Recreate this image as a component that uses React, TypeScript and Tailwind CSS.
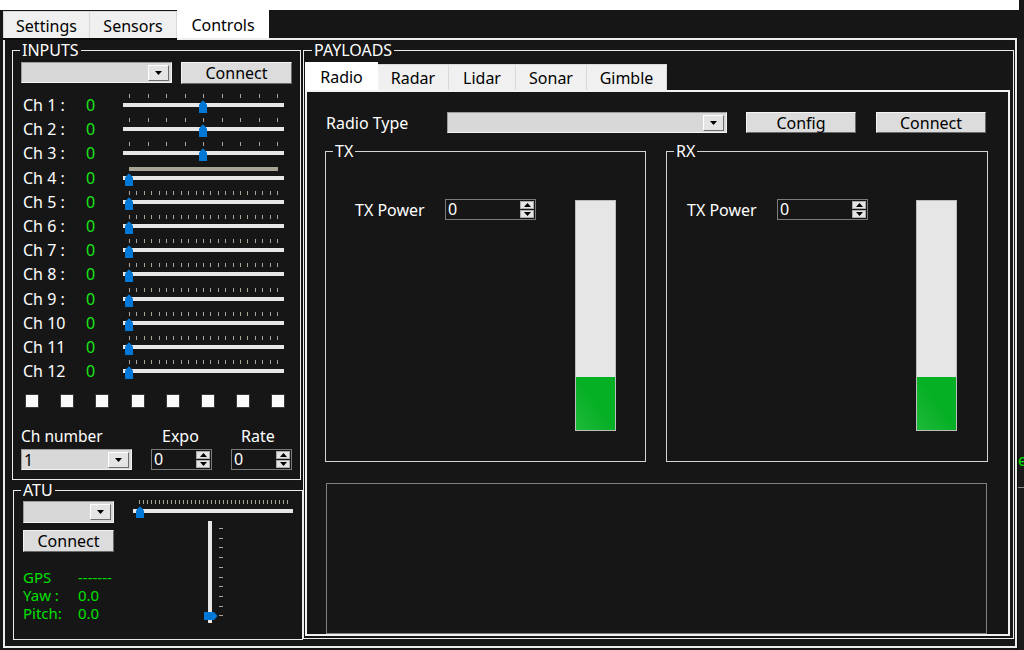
import React from "react";

type SliderProps = {
  ticks: number;
  pos: number;
  bar?: boolean;
};

const UpThumb = ({ h = 13 }: { h?: number }) => (
  <svg width="8" height={h} viewBox={`0 0 8 ${h}`}>
    <path d={`M0 4.5 L3.2 1 Q4 0.2 4.8 1 L8 4.5 V${h} H0 Z`} fill="#0078d7" />
  </svg>
);

const ChSlider = ({ ticks, pos, bar }: SliderProps) => {
  const step = (154 - 6) / (ticks - 1);
  return (
    <div className="relative w-[161px] h-full">
      {bar ? (
        <div className="absolute left-[6px] top-[1.5px] w-[149px] h-[4px] bg-[#a8a496]" />
      ) : (
        Array.from({ length: ticks }).map((_, i) => (
          <div
            key={i}
            className="absolute top-[1px] w-px h-[4px] bg-[#aaa598]"
            style={{ left: Math.round(6 + i * step) }}
          />
        ))
      )}
      <div className="absolute left-0 top-[10px] w-full h-[4px] bg-[#e7e7e7]" />
      <div className="absolute top-[7px] flex" style={{ left: pos - 4 }}>
        <UpThumb />
      </div>
    </div>
  );
};

const Channel = ({ n, ticks, pos, bar }: { n: number } & SliderProps) => (
  <div className="flex h-[24.2px] items-center">
    <span className="w-[73px] pl-[10px] text-[16px] leading-[18px] text-white">
      Ch {n}
      {n < 10 ? " :" : ""}
    </span>
    <span className="w-[37px] text-[16px] leading-[18px] text-[#19e619]">0</span>
    <ChSlider ticks={ticks} pos={pos} bar={bar} />
  </div>
);

const Combo = ({ className, value }: { className: string; value?: string }) => (
  <div
    className={`flex items-center justify-between bg-[#d8d8d8] border border-t-[#9d9d9d] border-l-[#9d9d9d] border-r-[#f4f4f4] border-b-[#f4f4f4] ${className}`}
  >
    <span className="pl-[2px] text-[16px] leading-[18px] text-black">{value}</span>
    <div className="mr-[2px] w-[21px] h-[16px] flex items-center justify-center bg-[#e4e4e4] border border-t-white border-l-white border-r-[#6d6d6d] border-b-[#6d6d6d]">
      <svg width="7" height="4" viewBox="0 0 7 4">
        <path d="M0 0H7L3.5 4Z" fill="#000" />
      </svg>
    </div>
  </div>
);

const Button = ({ className, children }: { className: string; children: React.ReactNode }) => (
  <div
    className={`flex items-center justify-center bg-[#dcdcdc] border border-t-[#f4f4f4] border-l-[#f4f4f4] border-r-[#6a6a6a] border-b-[#6a6a6a] text-[16px] leading-[18px] text-black ${className}`}
  >
    {children}
  </div>
);

const Spin = ({ className }: { className: string }) => (
  <div className={`flex bg-[#161616] border border-[#7c7c7c] ${className}`}>
    <span className="flex-1 pl-[2px] text-[16px] leading-[19px] text-white">0</span>
    <div className="w-[16px] flex flex-col p-px gap-px">
      <div className="flex-1 flex items-center justify-center bg-[#e5e5e5] border border-[#acacac]">
        <svg width="7" height="4" viewBox="0 0 7 4">
          <path d="M0 4H7L3.5 0Z" fill="#000" />
        </svg>
      </div>
      <div className="flex-1 flex items-center justify-center bg-[#e5e5e5] border border-[#acacac]">
        <svg width="7" height="4" viewBox="0 0 7 4">
          <path d="M0 0H7L3.5 4Z" fill="#000" />
        </svg>
      </div>
    </div>
  </div>
);

const Level = ({ className }: { className: string }) => (
  <div className={`w-[41px] h-[231px] flex flex-col justify-end border border-[#bcbcbc] bg-[#e6e6e6] ${className}`}>
    <div className="h-[53px] bg-gradient-to-tr from-[#1cb93a] via-[#06b025] to-[#06b025]" />
  </div>
);

const channels: ({ n: number } & SliderProps)[] = [
  { n: 1, ticks: 9, pos: 80 },
  { n: 2, ticks: 9, pos: 80 },
  { n: 3, ticks: 9, pos: 80 },
  { n: 4, ticks: 9, pos: 6, bar: true },
  ...[5, 6, 7, 8, 9, 10, 11, 12].map((n) => ({ n, ticks: 21, pos: 6 })),
];

const payloadTabs = [
  { label: "Radio", w: "w-[73px]" },
  { label: "Radar", w: "w-[71px]" },
  { label: "Lidar", w: "w-[67px]" },
  { label: "Sonar", w: "w-[71px]" },
  { label: "Gimble", w: "w-[80px]" },
];

export default function App() {
  return (
    <div className="w-[1024px] h-[650px] overflow-hidden bg-[#161616] font-['Noto_Sans',sans-serif] flex flex-col">
      <div className="h-[10px] w-[1019px] shrink-0 bg-white" />

      {/* top tabs */}
      <div className="flex h-[28px] shrink-0 items-end pl-[3px]">
        <div className="w-[87px] h-[27px] flex items-center justify-center pt-[2px] bg-[#f0f0f0] border border-b-0 border-[#d9d9d9] text-[16px] text-black">
          Settings
        </div>
        <div className="w-[87px] h-[27px] flex items-center justify-center pt-[2px] bg-[#f0f0f0] border border-b-0 border-l-0 border-[#d9d9d9] text-[16px] text-black">
          Sensors
        </div>
        <div className="w-[92px] h-[28px] flex items-center justify-center pt-[2px] bg-white text-[16px] text-black">
          Controls
        </div>
      </div>

      <div className="flex flex-1">
        <div className="ml-[3px] w-[1014px] flex flex-col">
          <div className="flex h-[2px]">
            <div className="w-[174px] bg-[#0c0c0c]" />
            <div className="flex-1 bg-[#eeeeee]" />
          </div>

          <div className="h-[608px] flex border-x-2 border-b-2 border-[#ececec]">
            {/* left column */}
            <div className="w-[298px] flex flex-col">
              <fieldset className="mt-[2px] ml-[7px] w-[289px] h-[438px] border border-[#ececec]">
                <legend className="ml-[7px] px-[2px] text-[16px] leading-[16px] text-white">INPUTS</legend>
                <div className="flex mt-[4px] ml-[8px]">
                  <Combo className="w-[151px] h-[21px]" />
                  <Button className="ml-[9px] w-[111px] h-[22px]">Connect</Button>
                </div>
                <div className="mt-[9px] flex flex-col">
                  {channels.map((c) => (
                    <Channel key={c.n} {...c} />
                  ))}
                </div>
                <div className="mt-[11px] ml-[12px] flex gap-[21.2px]">
                  {Array.from({ length: 8 }).map((_, i) => (
                    <div key={i} className="w-[14px] h-[14px] bg-[#fbfbfb] border border-[#3a3a3a]" />
                  ))}
                </div>
                <div className="mt-[19px] ml-[8px] flex">
                  <div className="w-[130px] flex flex-col">
                    <span className="text-[15.5px] leading-[18px] text-white">Ch number</span>
                    <Combo className="mt-[4px] w-[111px] h-[21px]" value="1" />
                  </div>
                  <div className="w-[80px] flex flex-col">
                    <span className="pl-[11px] text-[16px] leading-[18px] text-white">Expo</span>
                    <Spin className="mt-[4px] w-[61px] h-[21px]" />
                  </div>
                  <div className="w-[61px] flex flex-col">
                    <span className="pl-[10px] text-[16px] leading-[18px] text-white">Rate</span>
                    <Spin className="mt-[4px] w-[61px] h-[21px]" />
                  </div>
                </div>
              </fieldset>

              <fieldset className="mt-[2px] ml-[8px] w-[290px] h-[158px] border border-[#ececec]">
                <legend className="ml-[7px] px-[2px] text-[16px] leading-[16px] text-white">ATU</legend>
                <div className="flex">
                  <div className="ml-[9px] w-[91px] flex flex-col">
                    <Combo className="mt-[3px] w-[91px] h-[22px]" />
                    <Button className="mt-[7px] w-[91px] h-[22px]">Connect</Button>
                    <div className="mt-[17px] w-[120px] flex flex-col gap-[1px] text-[15px] leading-[17px] text-[#00e000] whitespace-nowrap">
                      <div className="flex">
                        <span className="w-[55px]">GPS</span>
                        <span>-------</span>
                      </div>
                      <div className="flex">
                        <span className="w-[55px]">Yaw :</span>
                        <span>0.0</span>
                      </div>
                      <div className="flex">
                        <span className="w-[55px]">Pitch:</span>
                        <span>0.0</span>
                      </div>
                    </div>
                  </div>
                  <div className="ml-[19px] flex flex-col">
                    <div className="relative w-[160px] h-[20px]">
                      {Array.from({ length: 38 }).map((_, i) => (
                        <div
                          key={i}
                          className="absolute top-[2px] w-px h-[4px] bg-[#aaa598]"
                          style={{ left: Math.round(6 + i * 4) }}
                        />
                      ))}
                      <div className="absolute left-0 top-[11px] w-full h-[4px] bg-[#e7e7e7]" />
                      <div className="absolute left-[3px] top-[8px] flex">
                        <UpThumb h={12} />
                      </div>
                    </div>
                    <div className="relative ml-[71px] mt-[3px] w-[20px] h-[102px]">
                      <div className="absolute left-[4px] top-0 w-[4px] h-full bg-[#e7e7e7]" />
                      {Array.from({ length: 10 }).map((_, i) => (
                        <div
                          key={i}
                          className="absolute left-[15px] w-[4px] h-px bg-[#aaa598]"
                          style={{ top: Math.round(7 + i * 9.7) }}
                        />
                      ))}
                      <div className="absolute left-0 top-[91px] flex">
                        <svg width="14" height="8" viewBox="0 0 14 8">
                          <path d="M0 0 H10 L13 3.2 Q13.8 4 13 4.8 L10 8 H0 Z" fill="#0078d7" />
                        </svg>
                      </div>
                    </div>
                  </div>
                </div>
              </fieldset>
            </div>

            {/* payloads */}
            <fieldset className="mt-[2px] w-[711px] h-[597px] border border-[#ececec]">
              <legend className="ml-[8px] px-[2px] text-[16px] leading-[16px] text-white">PAYLOADS</legend>
              <div className="mt-[4px] ml-[1px] flex items-end h-[28px]">
                {payloadTabs.map((t, i) =>
                  i === 0 ? (
                    <div key={t.label} className={`${t.w} h-[28px] flex items-center justify-center pt-[1px] bg-white text-[16px] text-black`}>
                      {t.label}
                    </div>
                  ) : (
                    <div
                      key={t.label}
                      className={`${t.w} h-[26px] flex items-center justify-center bg-[#f0f0f0] border border-b-0 border-l-0 border-[#d9d9d9] text-[16px] text-black`}
                    >
                      {t.label}
                    </div>
                  )
                )}
              </div>
              <div className="ml-[1px] w-[705px] h-[546px] border-2 border-[#f2f2f2] flex flex-col">
                <div className="mt-[20px] ml-[19px] flex items-center h-[21px]">
                  <span className="w-[121px] text-[16px] leading-[18px] text-white">Radio Type</span>
                  <Combo className="w-[280px] h-[21px]" />
                  <Button className="ml-[19px] w-[110px] h-[21px]">Config</Button>
                  <Button className="ml-[20px] w-[110px] h-[21px]">Connect</Button>
                </div>

                <div className="mt-[10px] ml-[18px] flex">
                  <fieldset className="w-[321px] h-[319px] border border-[#d4d4d4]">
                    <legend className="ml-[7px] px-[2px] text-[16px] leading-[16px] text-white">TX</legend>
                    <div className="mt-[40px] flex items-start">
                      <div className="flex items-center h-[21px]">
                        <span className="w-[119px] pl-[29px] text-[16px] leading-[18px] text-white">TX Power</span>
                        <Spin className="w-[91px] h-[21px]" />
                      </div>
                      <Level className="ml-[39px] mt-[1px]" />
                    </div>
                  </fieldset>
                  <fieldset className="ml-[20px] w-[322px] h-[319px] border border-[#d4d4d4]">
                    <legend className="ml-[7px] px-[2px] text-[16px] leading-[16px] text-white">RX</legend>
                    <div className="mt-[40px] flex items-start">
                      <div className="flex items-center h-[21px]">
                        <span className="w-[110px] pl-[20px] text-[16px] leading-[18px] text-white">TX Power</span>
                        <Spin className="w-[91px] h-[21px]" />
                      </div>
                      <Level className="ml-[48px] mt-[1px]" />
                    </div>
                  </fieldset>
                </div>

                <div className="mt-[21px] ml-[19px] w-[661px] h-[151px] border border-[#7f7f7f]" />
              </div>
            </fieldset>
          </div>
        </div>

        {/* clipped neighbour on the right */}
        <div className="flex-1 flex flex-col overflow-hidden border-l border-[#0a0a0a] bg-[#1a1a1a]">
          <span className="mt-[414px] ml-0 text-[16px] leading-[16px] text-[#00e000]">e</span>
          <div className="mt-[19px] h-px w-full bg-[#8a8a8a]" />
        </div>
      </div>
    </div>
  );
}
